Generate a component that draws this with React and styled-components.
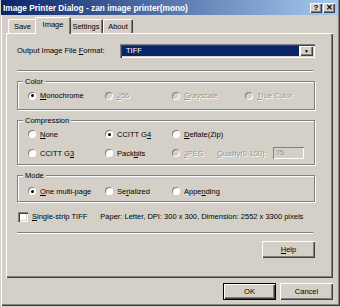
import styled, { createGlobalStyle } from 'styled-components'

const GlobalStyle = createGlobalStyle`
  html, body {
    margin: 0;
    padding: 0;
    background: #d4d0c8;
  }
  body {
    font-family: "Liberation Sans", Arial, sans-serif;
    font-size: 7.5px;
    color: #000;
  }
  * { box-sizing: border-box; }
`

const Window = styled.div`
  width: 340px;
  height: 306px;
  display: flex;
  flex-direction: column;
  background: #d4d0c8;
  box-shadow: inset 1px 0 #d4d0c8, inset 2px 0 #fff, inset -1px -1px #404040, inset -2px -2px #808080;
`

const TitleBar = styled.div`
  height: 15px;
  margin: 0 2px 0 1px;
  display: flex;
  align-items: center;
  padding: 0 3px 0 2px;
  background: linear-gradient(to right, #0a246a, #a6caf0);
  color: #fff;
  font-weight: bold;
  font-size: 8.3px;
`

const TitleText = styled.span`
  flex: 1;
  white-space: nowrap;
`

const TitleButton = styled.div`
  width: 12px;
  height: 10px;
  margin-left: ${({ gap }) => gap || 0}px;
  display: flex;
  align-items: center;
  justify-content: center;
  background: #d4d0c8;
  color: #000;
  font-size: 8px;
  font-weight: bold;
  box-shadow: inset 1px 1px #fff, inset -1px -1px #404040, inset -2px -2px #808080;
`

const TabStrip = styled.div`
  display: flex;
  align-items: flex-end;
  height: 16px;
  margin: 2px 0 0 6px;
  padding-left: 2px;
  position: relative;
  z-index: 1;
`

const Tab = styled.div`
  height: ${({ active }) => (active ? 17 : 14)}px;
  margin: ${({ active }) => (active ? '0 -2px -1px -2px' : '0')};
  padding-top: ${({ active }) => (active ? 3 : 3)}px;
  width: ${({ w }) => w}px;
  text-align: center;
  background: #d4d0c8;
  position: relative;
  z-index: ${({ active }) => (active ? 2 : 1)};
  border-top-left-radius: 2px;
  border-top-right-radius: 2px;
  box-shadow: inset 1px 1px #fff, inset -1px 0 #404040, inset -2px 0 #808080;
  white-space: nowrap;
`

const Panel = styled.div`
  margin-left: 6px;
  width: 327px;
  height: 245px;
  display: flex;
  flex-direction: column;
  padding: 1px 0 0 11px;
  box-shadow: inset 1px 1px #fff, inset -1px -1px #404040, inset -2px -2px #808080;
`

const FormatRow = styled.div`
  display: flex;
  align-items: center;
  margin-top: 10px;
  height: 13px;
`

const FieldLabel = styled.span`
  width: ${({ w }) => w}px;
`

const Select = styled.div`
  width: 195px;
  height: 14px;
  display: flex;
  padding: 2px;
  background: #fff;
  box-shadow: inset 1px 1px #808080, inset 2px 2px #404040, inset -1px -1px #fff, inset -2px -2px #d4d0c8;
`

const SelectValue = styled.div`
  flex: 1;
  background: #0a246a;
  color: #fff;
  padding-left: 4px;
  line-height: 10px;
  margin-right: 1px;
`

const DropButton = styled.div`
  width: 13px;
  display: flex;
  align-items: center;
  justify-content: center;
  background: #d4d0c8;
  font-size: 5px;
  box-shadow: inset 1px 1px #fff, inset -1px -1px #404040, inset -2px -2px #808080;
`

const Separator = styled.div`
  width: 296px;
  height: 2px;
  margin-top: ${({ top }) => top}px;
  border-top: 1px solid #808080;
  border-bottom: 1px solid #fff;
`

const Group = styled.div`
  position: relative;
  width: 298px;
  height: ${({ h }) => h}px;
  margin-top: ${({ top }) => top}px;
  border: 1px solid #808080;
  box-shadow: inset 1px 1px #fff, 1px 1px #fff;
  padding: ${({ pad }) => pad || '0'};
  display: grid;
  grid-template-columns: 77px 67px 73px 1fr;
  align-content: ${({ center }) => (center ? 'center' : 'start')};
  row-gap: 7px;
  padding-left: 10px;
`

const Legend = styled.span`
  position: absolute;
  top: -5px;
  left: 5px;
  padding: 0 2px;
  background: #d4d0c8;
  line-height: 9px;
`

const Option = styled.label`
  display: flex;
  align-items: center;
  height: 12px;
  white-space: nowrap;
  color: ${({ disabled }) => (disabled ? '#98958e' : '#000')};
  text-shadow: ${({ disabled }) => (disabled ? '1px 1px 0 #fff' : 'none')};
`

const Radio = styled.span`
  width: 8px;
  height: 8px;
  margin-right: 4px;
  border-radius: 50%;
  flex: none;
  display: flex;
  align-items: center;
  justify-content: center;
  background: ${({ disabled }) => (disabled ? '#d4d0c8' : '#fff')};
  box-shadow: inset 1px 1px #808080, inset -1px -1px #fff;
  &::after {
    content: '';
    width: 3px;
    height: 3px;
    border-radius: 50%;
    background: ${({ checked }) => (checked ? '#000' : 'transparent')};
  }
`

const QualityCell = styled.div`
  display: flex;
  align-items: center;
  margin-left: -28px;
`

const QualityInput = styled.div`
  width: 31px;
  height: 12px;
  margin-left: 6px;
  padding: 2px 0 0 3px;
  line-height: 8px;
  color: #98958e;
  background: #d4d0c8;
  box-shadow: inset 1px 1px #808080, inset -1px -1px #fff;
`

const CheckRow = styled.div`
  display: flex;
  align-items: center;
  margin-top: 9px;
  height: 11px;
  padding-left: 1px;
`

const Checkbox = styled.span`
  width: 10px;
  height: 10px;
  margin-right: 4px;
  background: #fff;
  box-shadow: inset 1px 1px #808080, inset 2px 2px #404040, inset -1px -1px #fff, inset -2px -2px #d4d0c8;
`

const Info = styled.span`
  margin-left: 13px;
  white-space: nowrap;
`

const ButtonRow = styled.div`
  display: flex;
  justify-content: flex-end;
  gap: 4px;
  width: ${({ w }) => (w ? `${w}px` : 'auto')};
  margin-top: ${({ top }) => top}px;
  padding-right: ${({ right }) => right || 0}px;
`

const Button = styled.div`
  width: 53px;
  height: 17px;
  display: flex;
  align-items: center;
  justify-content: center;
  background: #d4d0c8;
  box-shadow: ${({ isDefault }) =>
    isDefault
      ? 'inset 0 0 0 1px #000, inset 2px 2px #fff, inset -2px -2px #404040, inset -3px -3px #808080'
      : 'inset 1px 1px #fff, inset -1px -1px #404040, inset -2px -2px #808080'};
`

const U = styled.span`
  text-decoration: underline;
`

function RadioOption({ checked, disabled, children }) {
  return (
    <Option disabled={disabled}>
      <Radio checked={checked} disabled={disabled} />
      <span>{children}</span>
    </Option>
  )
}

export default function App() {
  return (
    <>
      <GlobalStyle />
      <Window>
        <TitleBar>
          <TitleText>Image Printer Dialog - zan image printer(mono)</TitleText>
          <TitleButton>?</TitleButton>
          <TitleButton gap={1}>✕</TitleButton>
        </TitleBar>
        <TabStrip>
          <Tab w={29}>Save</Tab>
          <Tab w={36} active>Image</Tab>
          <Tab w={34}>Settings</Tab>
          <Tab w={30}>About</Tab>
        </TabStrip>
        <Panel>
          <FormatRow>
            <FieldLabel w={103}>
              Output Image File <U>F</U>ormat:
            </FieldLabel>
            <Select>
              <SelectValue>TIFF</SelectValue>
              <DropButton>▼</DropButton>
            </Select>
          </FormatRow>
          <Separator top={13} />
          <Group top={9} h={29} center>
            <Legend>Color</Legend>
            <RadioOption checked>
              <U>M</U>onochrome
            </RadioOption>
            <RadioOption disabled>
              <U>2</U>56
            </RadioOption>
            <RadioOption disabled>
              <U>G</U>rayscale
            </RadioOption>
            <RadioOption disabled>
              <U>T</U>rue Color
            </RadioOption>
          </Group>
          <Group top={10} h={45} pad="7px 0 0">
            <Legend>Compression</Legend>
            <RadioOption>
              <U>N</U>one
            </RadioOption>
            <RadioOption checked>
              CCITT G<U>4</U>
            </RadioOption>
            <RadioOption>
              <U>D</U>eflate(Zip)
            </RadioOption>
            <span />
            <RadioOption>
              CCITT G<U>3</U>
            </RadioOption>
            <RadioOption>
              Pack<U>b</U>its
            </RadioOption>
            <RadioOption disabled>
              <U>J</U>PEG
            </RadioOption>
            <QualityCell>
              <Option disabled>
                <U>Q</U>uality(0-100):
              </Option>
              <QualityInput>75</QualityInput>
            </QualityCell>
          </Group>
          <Group top={10} h={27} pad="9px 0 0">
            <Legend>Mode</Legend>
            <RadioOption checked>
              <U>O</U>ne multi-page
            </RadioOption>
            <RadioOption>
              Se<U>r</U>ialized
            </RadioOption>
            <RadioOption>
              Appe<U>n</U>ding
            </RadioOption>
          </Group>
          <CheckRow>
            <Checkbox />
            <span>
              <U>S</U>ingle-strip TIFF
            </span>
            <Info>Paper: Letter, DPI: 300 x 300, Dimension: 2552 x 3300 pixels</Info>
          </CheckRow>
          <Separator top={10} />
          <ButtonRow w={298} top={7}>
            <Button>
              <U>H</U>elp
            </Button>
          </ButtonRow>
        </Panel>
        <ButtonRow top={5} right={7}>
          <Button isDefault>OK</Button>
          <Button>Cancel</Button>
        </ButtonRow>
      </Window>
    </>
  )
}
